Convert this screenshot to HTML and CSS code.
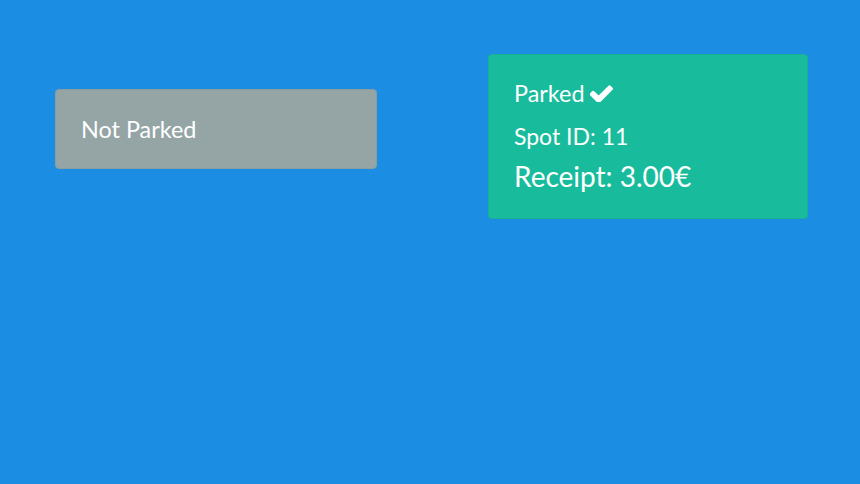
FILE: index.html
```html
<!DOCTYPE html>
<html>
<head>
<meta charset="utf-8">
<link rel="stylesheet" href="styles.css">
</head>
<body>
<div class="container">
  <div class="row">
    <div class="card card-grey">
      <div class="title">Not Parked</div>
    </div>
    <div class="card card-green">
      <div class="title">Parked <svg class="check" viewBox="143 270 1528 1156"><path d="M1671 566q0 40-28 68l-724 724-136 136q-28 28-68 28t-68-28l-136-136-362-362q-28-28-28-68t28-68l136-136q28-28 68-28t68 28l294 295 656-657q28-28 68-28t68 28l136 136q28 28 28 68z" fill="#fff"/></svg></div>
      <div class="spot">Spot ID: 11</div>
      <div class="receipt">Receipt: 3.00€</div>
    </div>
  </div>
</div>
</body>
</html>
```
FILE: styles.css
```css
html, body {
  margin: 0;
  padding: 0;
  background: #1b8ee3;
  font-family: Lato, "Open Sans", sans-serif;
  color: #fff;
}
.container {
  padding: 54px 0 0 55px;
}
.row {
  display: flex;
  align-items: flex-start;
  gap: 111px;
}
.card {
  box-sizing: border-box;
  border-radius: 4px;
  border: 1px solid;
}
.card-grey {
  width: 322px;
  height: 80px;
  margin-top: 35px;
  background: #95a5a6;
  border-color: #8c9d9e;
  padding: 24px 25px;
}
.card-green {
  width: 320px;
  height: 165px;
  background: #18bc9c;
  border-color: #17b294;
  padding: 23px 25px;
}
.title {
  font-size: 23.4px;
  line-height: 30px;
}
.check {
  width: 23px;
  height: 18px;
  vertical-align: 0px;
}
.spot {
  font-size: 23px;
  line-height: 30px;
  margin-top: 13px;
}
.receipt {
  font-size: 28px;
  line-height: 36px;
  margin-top: 7px;
}
```
